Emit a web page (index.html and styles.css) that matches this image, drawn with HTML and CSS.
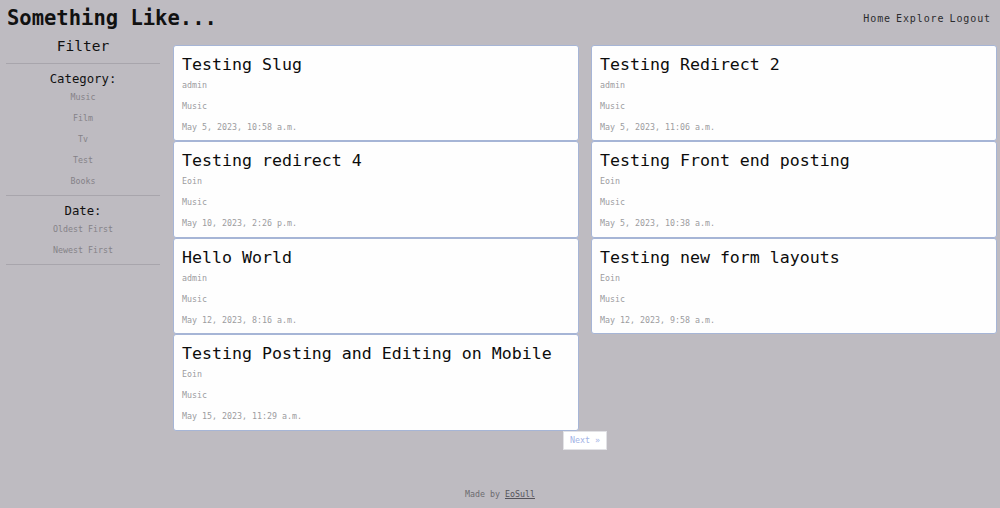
FILE: index.html
```html
<!DOCTYPE html>
<html lang="en">
<head>
<meta charset="utf-8">
<title>Something Like...</title>
<link rel="stylesheet" href="styles.css">
</head>
<body>
<header class="topbar">
  <h1 class="brand">Something Like...</h1>
  <nav class="nav">
    <a href="#">Home</a>
    <a href="#">Explore</a>
    <a href="#">Logout</a>
  </nav>
</header>
<div class="layout">
  <aside class="sidebar">
    <h2 class="filter-title">Filter</h2>
    <section class="filter-group">
      <h3 class="group-title">Category:</h3>
      <a class="filter-link" href="#">Music</a>
      <a class="filter-link" href="#">Film</a>
      <a class="filter-link" href="#">Tv</a>
      <a class="filter-link" href="#">Test</a>
      <a class="filter-link" href="#">Books</a>
    </section>
    <section class="filter-group">
      <h3 class="group-title">Date:</h3>
      <a class="filter-link" href="#">Oldest First</a>
      <a class="filter-link" href="#">Newest First</a>
    </section>
  </aside>
  <main class="content">
    <div class="posts">
      <article class="card">
        <h2 class="card-title">Testing Slug</h2>
        <p class="meta">admin</p>
        <p class="meta">Music</p>
        <p class="meta">May 5, 2023, 10:58 a.m.</p>
      </article>
      <article class="card">
        <h2 class="card-title">Testing Redirect 2</h2>
        <p class="meta">admin</p>
        <p class="meta">Music</p>
        <p class="meta">May 5, 2023, 11:06 a.m.</p>
      </article>
      <article class="card">
        <h2 class="card-title">Testing redirect 4</h2>
        <p class="meta">Eoin</p>
        <p class="meta">Music</p>
        <p class="meta">May 10, 2023, 2:26 p.m.</p>
      </article>
      <article class="card">
        <h2 class="card-title">Testing Front end posting</h2>
        <p class="meta">Eoin</p>
        <p class="meta">Music</p>
        <p class="meta">May 5, 2023, 10:38 a.m.</p>
      </article>
      <article class="card">
        <h2 class="card-title">Hello World</h2>
        <p class="meta">admin</p>
        <p class="meta">Music</p>
        <p class="meta">May 12, 2023, 8:16 a.m.</p>
      </article>
      <article class="card">
        <h2 class="card-title">Testing new form layouts</h2>
        <p class="meta">Eoin</p>
        <p class="meta">Music</p>
        <p class="meta">May 12, 2023, 9:58 a.m.</p>
      </article>
      <article class="card">
        <h2 class="card-title">Testing Posting and Editing on Mobile</h2>
        <p class="meta">Eoin</p>
        <p class="meta">Music</p>
        <p class="meta">May 15, 2023, 11:29 a.m.</p>
      </article>
    </div>
    <div class="pager">
      <a class="next" href="#">Next &raquo;</a>
    </div>
  </main>
</div>
<footer class="footer">Made by <a href="#">EoSull</a></footer>
</body>
</html>
```
FILE: styles.css
```css
* { box-sizing: border-box; }
html, body { margin: 0; padding: 0; }
body {
  background: #bebbc1;
  font-family: "DejaVu Sans Mono", "Liberation Mono", monospace;
  color: #111;
  height: 508px;
  overflow: hidden;
}
a { text-decoration: none; color: inherit; }

.topbar {
  display: flex;
  justify-content: space-between;
  align-items: center;
  height: 36px;
  padding: 0 9px 0 7px;
}
.brand {
  margin: 0;
  font-size: 20.5px;
  font-weight: bold;
  line-height: 24px;
  color: #111;
}
.nav {
  display: flex;
  gap: 5px;
  font-size: 10px;
  letter-spacing: 0.9px;
  color: #2b2b2e;
}

.layout {
  display: flex;
  align-items: flex-start;
}
.sidebar {
  width: 154px;
  margin-left: 6px;
  flex: none;
  text-align: center;
}
.filter-title {
  margin: 0;
  font-size: 14.5px;
  font-weight: normal;
  line-height: 20px;
  padding-bottom: 7px;
  border-bottom: 1px solid #a8a5ac;
}
.filter-group {
  display: flex;
  flex-direction: column;
  padding-top: 7px;
  padding-bottom: 3px;
  border-bottom: 1px solid #a8a5ac;
}
.group-title {
  margin: 0;
  font-size: 12.3px;
  font-weight: normal;
  line-height: 16px;
  color: #111;
}
.filter-link {
  font-size: 8.3px;
  line-height: 21px;
  color: #858288;
}

.content {
  flex: 1;
  margin-left: 13px;
  margin-right: 3px;
  margin-top: 8.5px;
}
.posts {
  display: grid;
  grid-template-columns: 1fr 1fr;
  column-gap: 12px;
}
.card {
  height: 96.5px;
  background: #fefefe;
  border: 1.5px solid #a6b5d6;
  border-radius: 3px;
  padding: 9px 8px 0 8px;
}
.card-title {
  margin: 0;
  font-size: 16.6px;
  font-weight: normal;
  line-height: 20px;
  color: #0c0c0c;
}
.meta {
  margin: 0;
  font-size: 8.3px;
  line-height: 21px;
  color: #9c9c9e;
}
.pager {
  display: flex;
  justify-content: center;
}
.next {
  display: block;
  background: #fff;
  border: 1px solid #e2e2e6;
  font-size: 8.3px;
  line-height: 17px;
  padding: 0 6px;
  color: #a3b3e6;
}
.footer {
  text-align: center;
  font-size: 8.3px;
  margin-top: 37px;
  line-height: 14px;
  color: #6d6b70;
}
.footer a {
  text-decoration: underline;
  color: #55535a;
}
```
